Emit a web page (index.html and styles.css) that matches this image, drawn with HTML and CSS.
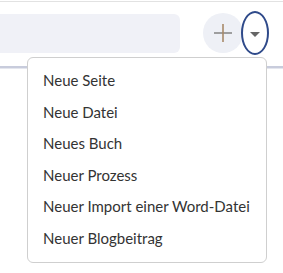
FILE: index.html
```html
<!DOCTYPE html>
<html lang="de">
<head>
    <meta charset="UTF-8">
    <meta name="viewport" content="width=device-width, initial-scale=1.0">
    <title>Neu</title>
    <link rel="stylesheet" href="styles.css">
</head>
<body>
    <div class="header">
        <div class="toolbar">
            <div class="search"></div>
            <button class="add-button" aria-label="Neu">
                <svg width="18" height="18" viewBox="0 0 18 18">
                    <line x1="0" y1="9" x2="18" y2="9" stroke="#8a8a8a" stroke-width="1.6"/>
                    <line x1="9" y1="0" x2="9" y2="18" stroke="#a88a6a" stroke-width="1.6"/>
                </svg>
            </button>
            <button class="toggle" aria-label="Menü öffnen">
                <span class="caret"></span>
            </button>
        </div>
        <div class="divider"></div>
    </div>

    <!-- Dropdown -->
    <ul class="menu">
        <li>Neue Seite</li>
        <li>Neue Datei</li>
        <li>Neues Buch</li>
        <li>Neuer Prozess</li>
        <li>Neuer Import einer Word-Datei</li>
        <li>Neuer Blogbeitrag</li>
    </ul>
</body>
</html>
```

FILE: styles.css
```css
html, body {
    min-height: 100%;
}

body {
    margin: 0;
    font-family: Lato, "Liberation Sans", sans-serif;
    background-color: #ffffff;
}

.header {
    margin-top: 1px;
    border-top: 1px solid #e2e2e2;
}

.toolbar {
    display: flex;
    align-items: center;
    height: 64px;
}

.search {
    width: 180px;
    height: 39px;
    margin-top: -2px;
    background-color: #f0f1f7;
    border-radius: 0 6px 6px 0;
}

.add-button {
    display: flex;
    justify-content: center;
    align-items: center;
    width: 40px;
    height: 40px;
    margin-left: 23px;
    margin-top: -2px;
    padding: 0;
    border: none;
    border-radius: 50%;
    background-color: #eef0f6;
}

.toggle {
    display: flex;
    justify-content: center;
    align-items: center;
    width: 28px;
    height: 44px;
    margin-left: -2px;
    margin-top: -2px;
    padding: 0;
    background: transparent;
    border: 2px solid #2f4a8a;
    border-radius: 50%;
}

.caret {
    width: 0;
    height: 0;
    margin-top: 2px;
    border-left: 5px solid transparent;
    border-right: 5px solid transparent;
    border-top: 5px solid #666666;
}

.divider {
    height: 2px;
    background-color: #c8ccdc;
    border-bottom: 1px solid #e4e6ee;
}

/* 下拉選單 */
.menu {
    position: relative;
    z-index: 1;
    width: 238px;
    margin: -12px 0 0 27px;
    padding: 7px 0;
    list-style: none;
    background-color: #ffffff;
    border: 1px solid #cfcfcf;
    border-radius: 6px;
}

.menu li {
    height: 31.6px;
    line-height: 31.6px;
    padding: 0 15px;
    font-size: 15px;
    color: #333333;
    white-space: nowrap;
}
```
